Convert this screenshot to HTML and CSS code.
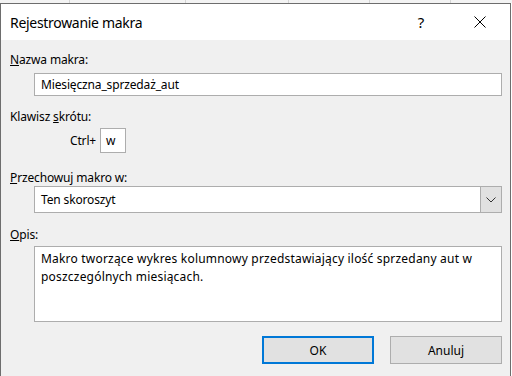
FILE: index.html
```html
<!DOCTYPE html>
<html lang="pl">
<head>
    <meta charset="UTF-8">
    <title>Rejestrowanie makra</title>
    <link rel="stylesheet" href="styles.css">
</head>
<body>
    <div class="sheet-strip">
        <span class="cell c1"></span>
        <span class="cell c2"></span>
        <span class="cell c3"></span>
        <span class="cell c4"></span>
        <span class="cell c5"></span>
        <span class="cell c6"></span>
    </div>

    <div class="dialog">
        <div class="title-bar">
            <span class="title">Rejestrowanie makra</span>
            <span class="title-btn help">?</span>
            <span class="title-btn close">
                <svg width="12" height="12" viewBox="0 0 12 12">
                    <path d="M0.5 0.5 L11.5 11.5 M11.5 0.5 L0.5 11.5" stroke="#000" stroke-width="1" fill="none"/>
                </svg>
            </span>
        </div>

        <div class="dialog-body">
            <label class="field-label"><u>N</u>azwa makra:</label>
            <div class="text-input">Miesięczna_sprzedaż_aut</div>

            <label class="field-label gap-top"><span>Klawisz <u>s</u>krótu:</span></label>
            <div class="shortcut-row">
                <span class="ctrl">Ctrl+</span>
                <div class="key-box">w</div>
            </div>

            <label class="field-label gap-store"><u>P</u>rzechowuj makro w:</label>
            <div class="select">
                <span class="select-value">Ten skoroszyt</span>
                <span class="select-arrow">
                    <svg width="10" height="6" viewBox="0 0 10 6">
                        <path d="M0.5 0.5 L5 5 L9.5 0.5" stroke="#333" stroke-width="1" fill="none"/>
                    </svg>
                </span>
            </div>

            <label class="field-label gap-desc"><u>O</u>pis:</label>
            <div class="textarea">Makro tworzące wykres kolumnowy przedstawiający ilość sprzedany aut w poszczególnych miesiącach.</div>

            <div class="button-row">
                <button class="btn btn-default">OK</button>
                <button class="btn">Anuluj</button>
            </div>
        </div>
    </div>
</body>
</html>
```

FILE: styles.css
```css
body {
    margin: 0;
    background-color: #ffffff;
    font-family: 'Noto Sans', 'Open Sans', sans-serif;
    font-size: 12px;
    color: #000;
    width: 512px;
    height: 376px;
    overflow: hidden;
}

/* arkusz widoczny nad oknem */
.sheet-strip {
    display: flex;
    height: 3px;
    background-color: #f3f3f3;
}

.cell {
    border-right: 1px solid #d4d4d4;
}

.c1 { width: 69px; }
.c2 { width: 115px; }
.c3 { width: 102px; }
.c4 { width: 80px; }
.c5 { width: 80px; }
.c6 { flex: 1; border-right: none; }

.dialog {
    width: 509px;
    height: 372px;
    border: 1px solid #6d6d6d;
    border-bottom: none;
    background-color: #f0f0f0;
    display: flex;
    flex-direction: column;
}

.title-bar {
    height: 36px;
    background-color: #ffffff;
    display: flex;
    align-items: center;
    padding-left: 9px;
}

.title {
    font-size: 14px;
    flex: 1;
    letter-spacing: -0.3px;
}

.title-btn {
    display: flex;
    align-items: center;
    justify-content: center;
    height: 36px;
}

.help {
    width: 16px;
    font-size: 15px;
    margin-right: 45px;
}

.close {
    width: 12px;
    margin-right: 24px;
}

.dialog-body {
    padding: 11px 8px 0 9px;
    display: flex;
    flex-direction: column;
    align-items: flex-start;
}

.field-label {
    line-height: 17px;
    letter-spacing: -0.15px;
}

.gap-top {
    margin-top: 12px;
}

.gap-store {
    margin-top: 16px;
}

.gap-desc {
    margin-top: 13px;
}

.text-input {
    align-self: stretch;
    margin: 5px 0 0 24px;
    height: 21px;
    line-height: 21px;
    padding-left: 6px;
    background-color: #fff;
    border: 1px solid #adadad;
    letter-spacing: -0.15px;
}

.shortcut-row {
    display: flex;
    align-items: center;
    gap: 4px;
    margin: 3px 0 0 60px;
}

.ctrl {
    letter-spacing: -0.15px;
}

.key-box {
    width: 19px;
    height: 23px;
    line-height: 23px;
    padding-left: 5px;
    background-color: #fff;
    border: 1px solid #adadad;
}

.select {
    align-self: stretch;
    margin: 0 0 0 24px;
    height: 25px;
    background-color: #fff;
    border: 1px solid #adadad;
    display: flex;
}

.select-value {
    flex: 1;
    line-height: 25px;
    padding-left: 6px;
    letter-spacing: -0.15px;
}

.select-arrow {
    width: 20px;
    background-color: #e1e1e1;
    border-left: 1px solid #adadad;
    display: flex;
    align-items: center;
    justify-content: center;
}

.textarea {
    align-self: stretch;
    margin: 3px 0 0 24px;
    height: 66px;
    padding: 3px 6px 5px;
    line-height: 18px;
    background-color: #fff;
    border: 1px solid #adadad;
    letter-spacing: 0.2px;
}

.button-row {
    align-self: stretch;
    display: flex;
    justify-content: flex-end;
    gap: 16px;
    margin-top: 14px;
}

.btn {
    width: 112px;
    height: 28px;
    font-family: inherit;
    font-size: 12px;
    background-color: #e1e1e1;
    border: 1px solid #adadad;
    padding: 0;
    color: #000;
}

.btn-default {
    border: 2px solid #0078d7;
}
```
